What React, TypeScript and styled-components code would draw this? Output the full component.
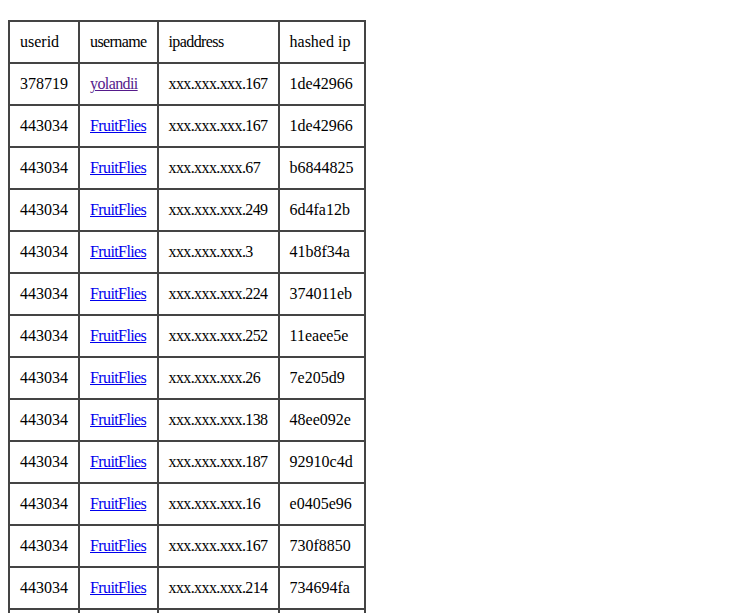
import styled, { createGlobalStyle } from "styled-components";

interface Login {
  userid: string;
  username: string;
  ip: string;
  hash: string;
  visited?: boolean;
}

const rows: Login[] = [
  { userid: "378719", username: "yolandii", ip: "xxx.xxx.xxx.167", hash: "1de42966", visited: true },
  { userid: "443034", username: "FruitFlies", ip: "xxx.xxx.xxx.167", hash: "1de42966" },
  { userid: "443034", username: "FruitFlies", ip: "xxx.xxx.xxx.67", hash: "b6844825" },
  { userid: "443034", username: "FruitFlies", ip: "xxx.xxx.xxx.249", hash: "6d4fa12b" },
  { userid: "443034", username: "FruitFlies", ip: "xxx.xxx.xxx.3", hash: "41b8f34a" },
  { userid: "443034", username: "FruitFlies", ip: "xxx.xxx.xxx.224", hash: "374011eb" },
  { userid: "443034", username: "FruitFlies", ip: "xxx.xxx.xxx.252", hash: "11eaee5e" },
  { userid: "443034", username: "FruitFlies", ip: "xxx.xxx.xxx.26", hash: "7e205d9" },
  { userid: "443034", username: "FruitFlies", ip: "xxx.xxx.xxx.138", hash: "48ee092e" },
  { userid: "443034", username: "FruitFlies", ip: "xxx.xxx.xxx.187", hash: "92910c4d" },
  { userid: "443034", username: "FruitFlies", ip: "xxx.xxx.xxx.16", hash: "e0405e96" },
  { userid: "443034", username: "FruitFlies", ip: "xxx.xxx.xxx.167", hash: "730f8850" },
  { userid: "443034", username: "FruitFlies", ip: "xxx.xxx.xxx.214", hash: "734694fa" },
  { userid: "443034", username: "FruitFlies", ip: "xxx.xxx.xxx.91", hash: "5c1e07ab" },
];

function App() {
  return (
    <>
      <GlobalStyle />
      <Table>
        <tbody>
          <tr>
            <Cell>userid</Cell>
            <Cell $tight>username</Cell>
            <Cell $tight>ipaddress</Cell>
            <Cell>hashed ip</Cell>
          </tr>
          {rows.map((r, i) => (
            <tr key={i}>
              <Cell>{r.userid}</Cell>
              <Cell $tight>
                <UserLink href="#" $visited={r.visited}>{r.username}</UserLink>
              </Cell>
              <Cell $tight>{r.ip}</Cell>
              <Cell>{r.hash}</Cell>
            </tr>
          ))}
        </tbody>
      </Table>
    </>
  );
}

export default App;

const GlobalStyle = createGlobalStyle`
  body {
    margin: 8px;
    padding-top: 12px;
    background: #fff;
    color: #000;
    font-family: "Liberation Serif", "Times New Roman", serif;
    font-size: 16px;
  }
`;

const Table = styled.table`
  border-collapse: collapse;
  border: 2px solid #444;
`;

const Cell = styled.td<{ $tight?: boolean }>`
  border: 2px solid #444;
  padding: 11px 10px;
  text-align: left;
  white-space: nowrap;
  letter-spacing: ${(p) => (p.$tight ? "-0.6px" : "normal")};
`;

const UserLink = styled.a<{ $visited?: boolean }>`
  color: ${(p) => (p.$visited ? "#551a8b" : "#0000ee")};
  text-decoration: underline;
`;
